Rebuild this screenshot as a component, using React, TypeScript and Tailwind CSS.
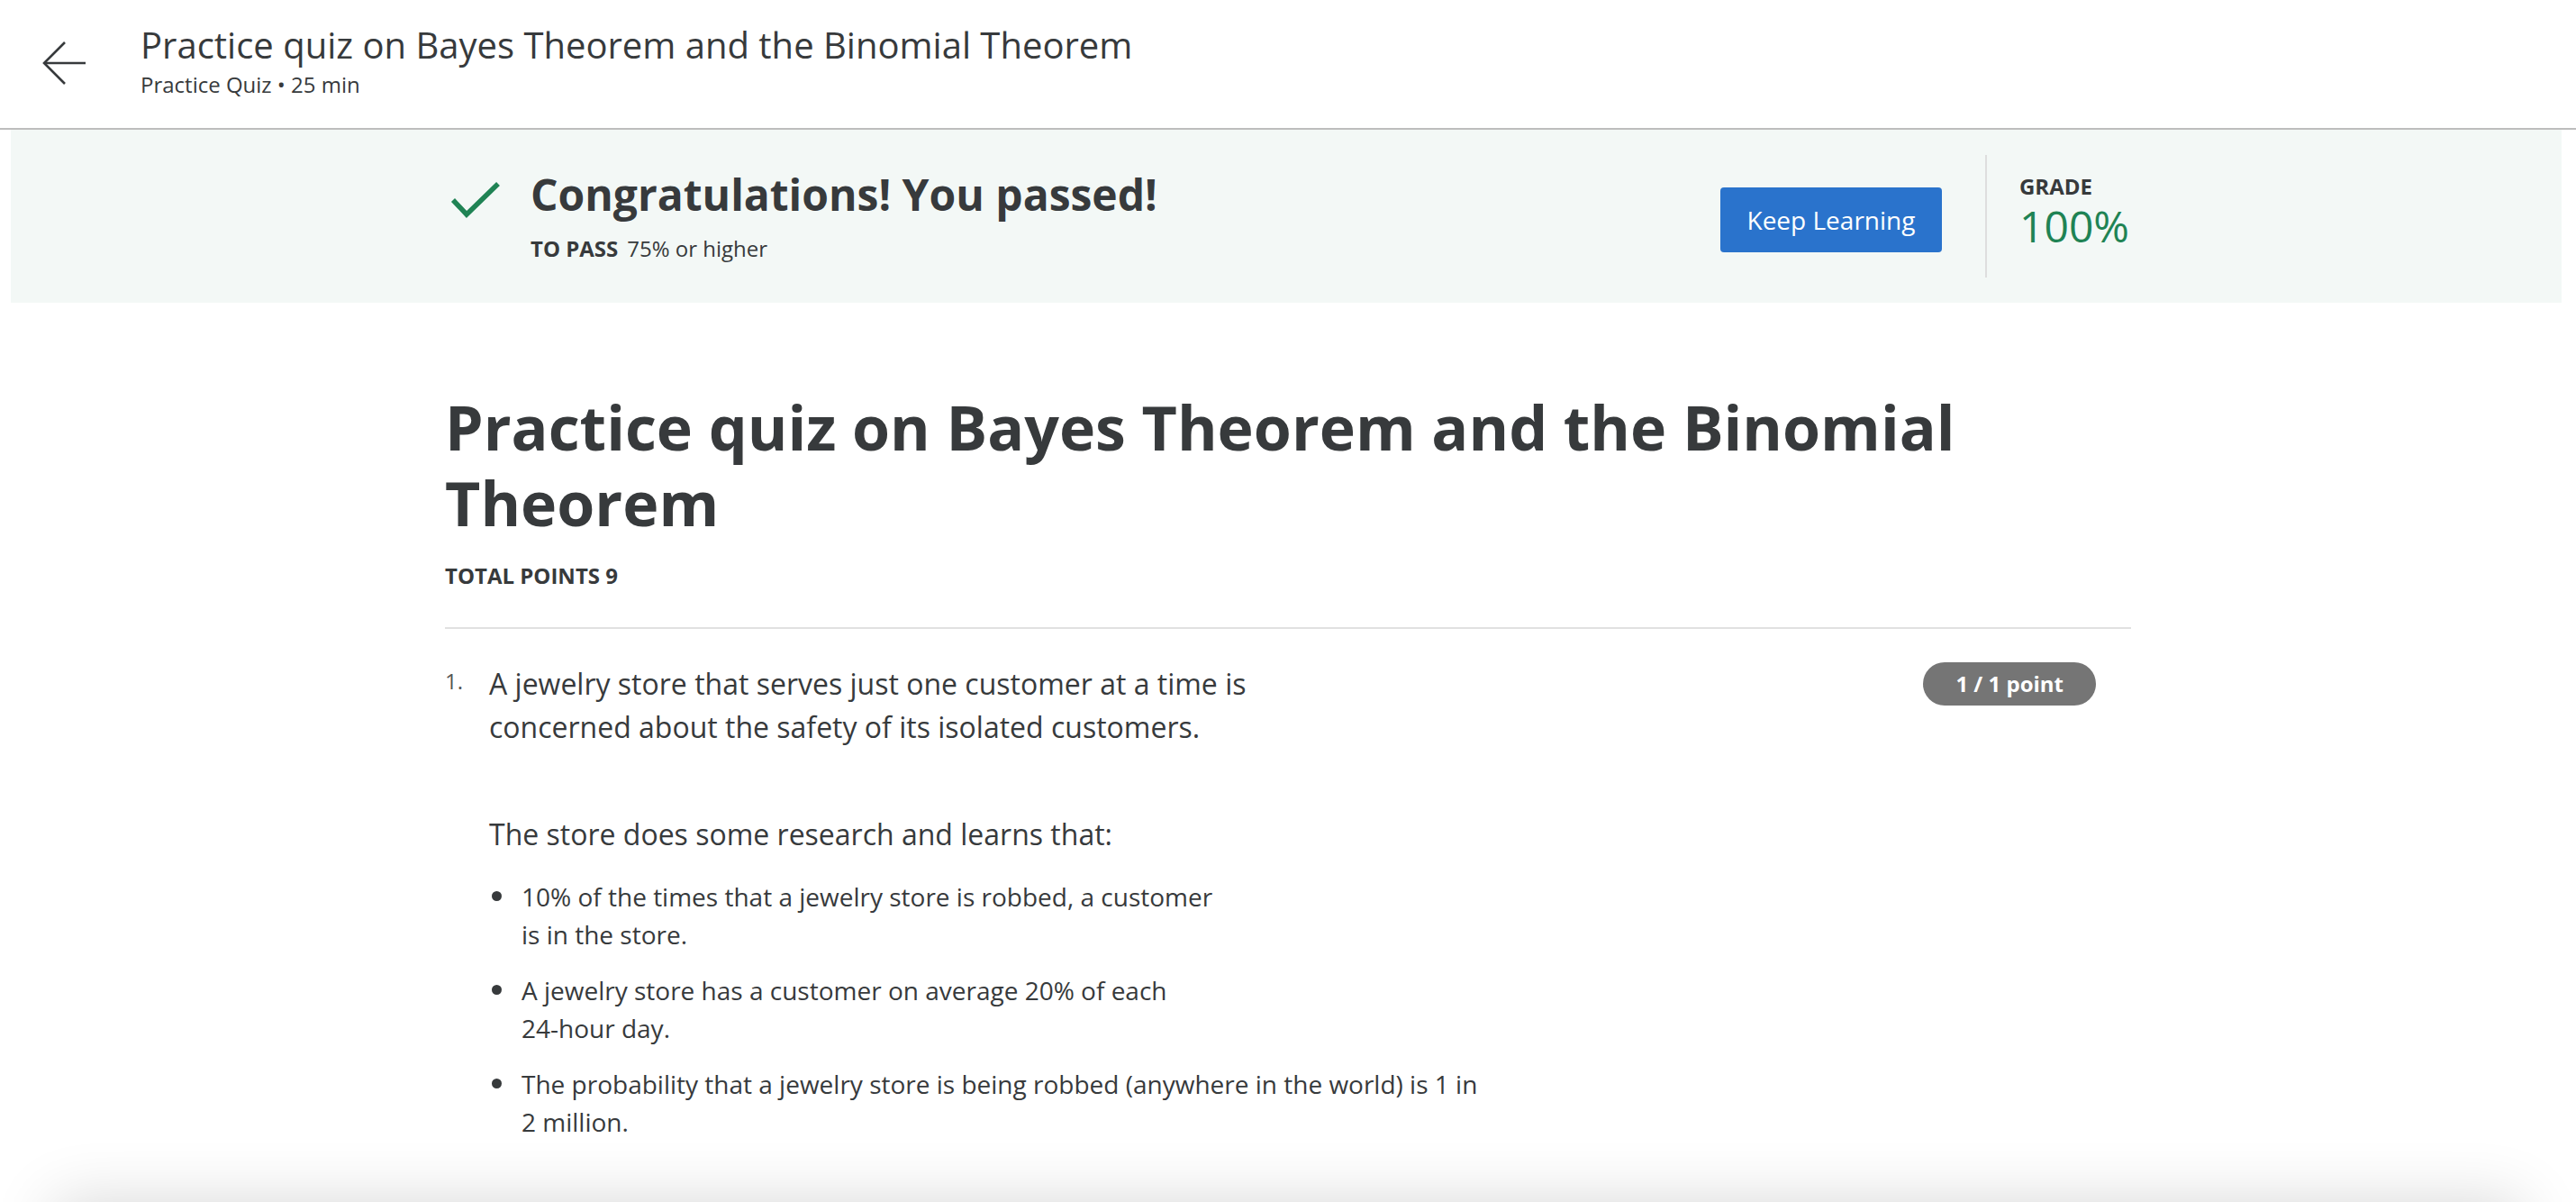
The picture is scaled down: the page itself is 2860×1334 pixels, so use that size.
import React from "react";

const BackArrow = () => (
  <svg viewBox="0 0 50 50" className="w-[50px] h-[50px]" fill="none" stroke="#373a3c" strokeWidth="2.6">
    <path d="M25 2 L2 25 L25 48" />
    <path d="M2 25 L48 25" />
  </svg>
);

const CheckMark = () => (
  <svg viewBox="0 0 72 48" className="w-[72px] h-[48px] shrink-0" fill="none" stroke="#1f8354" strokeWidth="5.5">
    <path d="M11 24 L26 40 L61 6" />
  </svg>
);

const bullets = [
  ["10% of the times that a jewelry store is robbed, a customer", "is in the store."],
  ["A jewelry store has a customer on average 20% of each", "24-hour day."],
  ["The probability that a jewelry store is being robbed (anywhere in the world) is 1 in", "2 million."],
];

export default function App() {
  return (
    <div className="h-screen overflow-hidden bg-white text-[#373a3c] font-['Open_Sans',sans-serif]">
      {/* top bar */}
      <header className="h-[144px] border-b-2 border-[#bdbdbd] flex items-start pl-[47px]">
        <div className="mt-[45px]">
          <BackArrow />
        </div>
        <div className="ml-[59px] pt-[26px]">
          <h1 className="text-[40px] leading-[48px]">Practice quiz on Bayes Theorem and the Binomial Theorem</h1>
          <p className="text-[24px] leading-[32px] mt-[4px]">Practice Quiz • 25 min</p>
        </div>
      </header>

      {/* result banner */}
      <div className="ml-[12px] mr-[16px] h-[192px] bg-[#f3f8f6] flex items-center">
        <div className="w-[1872px] mx-auto flex items-center justify-between">
          <div className="flex items-start">
            <div className="mt-[12px] mr-[25px]">
              <CheckMark />
            </div>
            <div>
              <h2 className="text-[48px] leading-[60px] font-bold">Congratulations! You passed!</h2>
              <div className="mt-[12px] text-[24px] leading-[36px]">
                <span className="font-bold mr-[10px]">TO PASS</span>75% or higher
              </div>
            </div>
          </div>
          <div className="flex items-center">
            <button className="mt-[8px] w-[246px] h-[72px] rounded-[4px] bg-[#2a73cc] text-white text-[28px] font-normal">
              Keep Learning
            </button>
            <div className="ml-[48px] h-[136px] border-l-2 border-[#dedede] pl-[36px] pt-[19px]">
              <div className="text-[24px] leading-[32px] font-bold">GRADE</div>
              <div className="text-[48px] leading-[56px] text-[#1f8354]">100%</div>
            </div>
          </div>
        </div>
      </div>

      {/* quiz body */}
      <main className="w-[1872px] mx-auto pt-[96px]">
        <h1 className="text-[68px] leading-[84px] font-bold">
          Practice quiz on Bayes Theorem and the Binomial Theorem
        </h1>
        <div className="mt-[23px] text-[24px] leading-[32px] font-bold">TOTAL POINTS 9</div>
        <div className="mt-[41px] border-t-2 border-[#e1e1e1]" />

        <div className="mt-[37px] flex items-start">
          <div className="w-[49px] mt-[3px] text-[24px] leading-[36px] text-[#555]">1.</div>
          <div className="flex-1">
            <p className="text-[32px] leading-[48px]">
              A jewelry store that serves just one customer at a time is
              <br />
              concerned about the safety of its isolated customers.
            </p>
            <p className="mt-[71px] text-[32px] leading-[48px]">The store does some research and learns that:</p>
            <ul className="mt-[24px] flex flex-col gap-[20px]">
              {bullets.map((b, i) => (
                <li key={i} className="flex items-start text-[28px] leading-[42px]">
                  <span className="w-[36px] shrink-0">
                    <span className="block ml-[3px] mt-[15px] w-[11px] h-[11px] rounded-full bg-[#373a3c]" />
                  </span>
                  <span>
                    {b[0]}
                    <br />
                    {b[1]}
                  </span>
                </li>
              ))}
            </ul>
          </div>
          <div className="mr-[39px] h-[48px] px-[36px] rounded-full bg-[#757575] text-white text-[24px] font-bold flex items-center">
            1 / 1 point
          </div>
        </div>
      </main>

      {/* footer bar sitting just below the fold, only its shadow shows */}
      <div className="fixed left-[60px] right-[60px] bottom-[-100px] h-[100px] bg-white shadow-[0_0_70px_rgba(0,0,0,0.16)]" />
    </div>
  );
}
